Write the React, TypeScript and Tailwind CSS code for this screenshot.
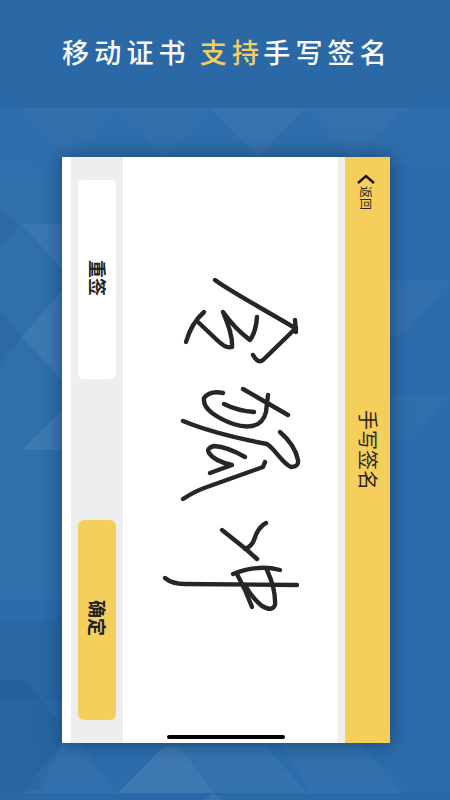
const titleFont = { fontFamily: '"Noto Sans CJK SC", sans-serif' };

// signature strokes, in page coordinates
const strokes = [
	'M215 280 C228 290 270 313 295 328',
	'M295 320 L296 332',
	'M296 328 L263 360 Q258 364 253 355',
	'M186 342 C190 328 196 319 204 312',
	'M198 322 L217 340 Q226 349 232 347 Q233 335 223 312 C230 322 242 334 250 340 Q256 332 257 317',
	'M223 393 Q210 390 204 398 Q203 406 212 413 C226 423 242 428 252 426 Q263 424 266 412 L268 395',
	'M243 389 L288 415',
	'M224 404 Q238 411 254 412',
	'M183 421 C200 428 225 436 267 444 C276 450 282 463 291 467 Q299 467 298 460 Q295 445 280 432',
	'M245 457 Q228 447 214 446 Q206 448 209 453 Q214 461 232 465 L210 473',
	'M183 499 Q195 491 207 487 L263 467 L265 462',
	'M222 530 L247 550 L257 559',
	'M266 523 Q258 527 254 540 Q252 546 245 549',
	'M165 578 Q172 584 185 584 L297 585',
	'M280 570 Q258 564 233 574',
	'M237 574 L245 590 L252 607',
	'M267 570 Q276 590 275 605 Q272 612 262 606 Q252 598 245 585',
];

// low-poly facets behind the phone
const facets = [
	{ points: '0,108 450,108 450,165 0,165', fill: '#ffffff', opacity: 0.02 },
	{ points: '20,108 120,108 70,160', fill: '#ffffff', opacity: 0.015 },
	{ points: '120,108 210,108 165,160', fill: '#ffffff', opacity: 0.015 },
	{ points: '210,108 305,108 258,157', fill: '#ffffff', opacity: 0.04 },
	{ points: '305,108 405,108 355,160', fill: '#ffffff', opacity: 0.02 },
	{ points: '0,165 62,165 62,600 0,600', fill: '#ffffff', opacity: 0.025 },
	{ points: '22,224 62,224 62,270', fill: '#ffffff', opacity: 0.06 },
	{ points: '0,210 20,224 0,250', fill: '#000000', opacity: 0.04 },
	{ points: '22,337 62,290 62,380', fill: '#ffffff', opacity: 0.07 },
	{ points: '0,310 22,337 0,365', fill: '#000000', opacity: 0.04 },
	{ points: '22,450 62,410 62,450', fill: '#ffffff', opacity: 0.07 },
	{ points: '0,621 62,621 62,700 0,700', fill: '#000000', opacity: 0.03 },
	{ points: '0,680 25,680 62,725 62,743 40,790 0,793', fill: '#000000', opacity: 0.06 },
	{ points: '390,281 450,281 405,335 390,335', fill: '#ffffff', opacity: 0.03 },
	{ points: '390,395 450,395 410,440 390,440', fill: '#ffffff', opacity: 0.025 },
	{ points: '62,743 80,743 115,793 22,793', fill: '#ffffff', opacity: 0.03 },
	{ points: '163,747 180,747 213,793 118,793', fill: '#ffffff', opacity: 0.09 },
	{ points: '180,747 267,747 307,793 213,793', fill: '#ffffff', opacity: 0.05 },
	{ points: '280,743 360,743 402,793 310,793', fill: '#ffffff', opacity: 0.03 },
	{ points: '213,793 205,800 222,800', fill: '#ffffff', opacity: 0.08 },
	{ points: '0,793 450,793 450,800 0,800', fill: '#000000', opacity: 0.02 },
];

const App = () => {
	return (
		<div
			className="relative w-[450px] h-[800px] overflow-hidden bg-[#2b6cab] flex flex-col"
			style={titleFont}
		>
			<svg
				className="absolute inset-0"
				width={450}
				height={800}
				viewBox="0 0 450 800"
			>
				<rect x={0} y={0} width={450} height={108} fill="#2a69a6" />
				{facets.map((f) => (
					<polygon key={f.points} points={f.points} fill={f.fill} opacity={f.opacity} />
				))}
			</svg>

			<h1 className="relative h-[157px] pt-[33px] pl-[62px] text-[27px] leading-[38px] tracking-[5.2px] font-medium text-[#fafbfc] whitespace-nowrap">
				移动证书<span className="ml-[9px] text-[#f3cd5e]">支持</span>
				<span className="-ml-[1px]">手写签名</span>
			</h1>

			<div className="relative ml-[62px] w-[328px] h-[586px] flex bg-white shadow-[0_0_18px_rgba(10,30,60,0.5)]">
				<div className="w-[9px] bg-white" />
				<div className="w-[52px] bg-[#eeeeee] flex flex-col justify-between pt-[23px] pb-[23px] pl-[7px]">
					<button className="w-[38px] h-[199px] pb-[3px] rounded-[5px] bg-white flex items-center justify-center text-[18px] font-bold text-[#222222] [writing-mode:vertical-rl] [text-orientation:sideways]">
						重签
					</button>
					<button className="w-[38px] h-[200px] pb-[4px] rounded-[6px] bg-[#f5cf5c] flex items-center justify-center text-[18px] font-bold text-[#222222] [writing-mode:vertical-rl] [text-orientation:sideways]">
						确定
					</button>
				</div>
				<div className="w-[215px] bg-white">
					<svg width={215} height={586} viewBox="123 157 215 586" fill="none">
						{strokes.map((d) => (
							<path
								key={d}
								d={d}
								stroke="#262626"
								strokeWidth={4.4}
								strokeLinecap="round"
								strokeLinejoin="round"
							/>
						))}
					</svg>
				</div>
				<div className="w-[7px] bg-[#eeeeea]" />
				<div className="w-[45px] bg-[#f5cf5c] relative flex items-center justify-center">
					<span className="text-[20px] text-[#2a2418] [writing-mode:vertical-rl] [text-orientation:sideways]">
						手写签名
					</span>
					<div className="absolute top-[17px] left-[12px] flex flex-col items-center">
						<svg width={18} height={10} viewBox="0 0 18 10" fill="none">
							<path d="M1 9 L9 2 L17 9" stroke="#1a1408" strokeWidth={2.4} />
						</svg>
						<span className="mt-[2px] text-[12px] leading-[12px] text-[#2a2418] [writing-mode:vertical-rl] [text-orientation:sideways]">
							返回
						</span>
					</div>
				</div>
				<div className="absolute left-1/2 -translate-x-1/2 bottom-[4px] w-[118px] h-[4px] rounded-full bg-black" />
			</div>
		</div>
	);
};

export default App;
